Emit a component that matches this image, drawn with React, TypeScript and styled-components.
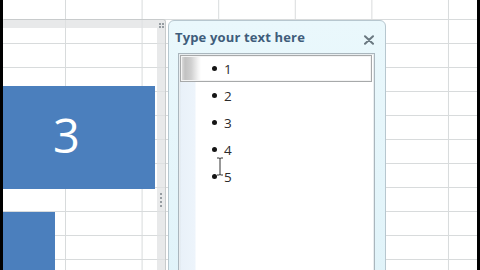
import React from "react";
import styled, { createGlobalStyle } from "styled-components";

const GlobalStyle = createGlobalStyle`
    html, body {
        margin: 0;
        padding: 0;
        background: #000;
    }
    * {
        box-sizing: border-box;
    }
`;

const Screen = styled.div`
    width: 480px;
    height: 270px;
    overflow: hidden;
    background: #000;
    padding: 0 3px;
    display: flex;
`;

/* the worksheet, grid lines drawn as a background */
const Sheet = styled.div`
    flex: 1;
    height: 100%;
    display: flex;
    align-items: flex-start;
    padding-top: 20px;
    background-color: #fff;
    background-image: linear-gradient(to bottom, #d8dbdc 1px, transparent 1px),
        linear-gradient(to right, #d8dbdc 1px, transparent 1px);
    background-size: 100% 24px, 76.6px 100%;
    background-position: 0 19px, 62px 0;
`;

const Frame = styled.div`
    position: relative;
    width: 162px;
    height: 270px;
    border-top: 8px solid rgba(224, 226, 227, 0.75);
    border-right: 8px solid rgba(224, 226, 227, 0.75);
    box-shadow: 1px -1px 0 #c8cbcc;
    border-top-right-radius: 3px;
    display: flex;
    flex-direction: column;
    padding-top: 58px;
`;

const Shape = styled.div<{ $w: number; $h: number }>`
    width: ${(p) => p.$w}px;
    height: ${(p) => p.$h}px;
    background: #4b7fbd;
    color: #fff;
    font-family: "Open Sans", "Liberation Sans", sans-serif;
    font-size: 47px;
    display: flex;
    align-items: center;
    justify-content: center;
    padding-right: 25px;
    padding-bottom: 6px;
`;

const Gap = styled.div`
    height: 23px;
`;

const Handle = styled.div<{ $vertical?: boolean }>`
    position: absolute;
    display: grid;
    grid-template-columns: ${(p) => (p.$vertical ? "2px" : "2px 2px")};
    gap: ${(p) => (p.$vertical ? "2px" : "1px 1px")};
    span {
        width: 2px;
        height: 2px;
        background: #7b8288;
        border-radius: 1px;
    }
`;

const Pane = styled.div`
    margin-left: 3px;
    width: 218px;
    height: 270px;
    border: 1px solid #b7c7cf;
    border-radius: 6px 6px 0 0;
    background: linear-gradient(to bottom, #eaf8fc, #e0f3f9);
    display: flex;
    flex-direction: column;
    padding: 0 10px 0 9px;
`;

const PaneHeader = styled.div`
    height: 32px;
    display: flex;
    align-items: center;
    justify-content: space-between;
    margin-left: -3px;
`;

const Title = styled.div`
    font-family: "Open Sans", "Liberation Sans", sans-serif;
    font-weight: 700;
    font-size: 13px;
    color: #3f5d7b;
    letter-spacing: 0.15px;
`;

const Close = styled.button`
    border: none;
    background: none;
    padding: 0;
    margin: 6px 0 0 0;
    width: 12px;
    height: 10px;
    display: flex;
    cursor: pointer;
`;

const ListBox = styled.div`
    position: relative;
    flex: 1;
    border: 1px solid #aab6bd;
    box-shadow: inset 0 0 0 1px #e9eef0;
    padding: 1px 2px 0 1px;
    background: linear-gradient(
        to right,
        #dfe6ec 0,
        #dfe6ec 1px,
        #e9f1f9 2px,
        #edf4fb 16px,
        #fff 17px
    );
`;

const Row = styled.div<{ $selected?: boolean }>`
    height: 27px;
    display: flex;
    align-items: center;
    padding-left: 31px;
    border: 1px solid ${(p) => (p.$selected ? "#a7a9aa" : "transparent")};
    box-shadow: ${(p) => (p.$selected ? "inset 0 0 0 1px #f4f4f4" : "none")};
    background: ${(p) =>
        p.$selected
            ? "linear-gradient(to right, #e2e2e2 0, #c2c2c2 4px, #cfcfcf 10px, #f3f3f3 17px, #fff 20px)"
            : "transparent"};
`;

const Bullet = styled.span`
    width: 5px;
    height: 5px;
    border-radius: 50%;
    background: #151515;
    margin-right: 7px;
    margin-top: -1px;
`;

const ItemText = styled.span`
    font-family: "Open Sans", "Liberation Sans", sans-serif;
    font-size: 13.5px;
    color: #2b2b2b;
`;

const Cursor = styled.svg`
    position: absolute;
    left: 37px;
    top: 103px;
`;

const items = ["1", "2", "3", "4", "5"];

const App = () => {
    return (
        <>
            <GlobalStyle />
            <Screen>
                <Sheet>
                    <Frame>
                        <Handle style={{ right: -7, top: -5 }}>
                            <span />
                            <span />
                            <span />
                            <span />
                        </Handle>
                        <Handle $vertical style={{ right: -5, top: 165 }}>
                            <span />
                            <span />
                            <span />
                            <span />
                        </Handle>
                        <Shape $w={152} $h={103}>
                            3
                        </Shape>
                        <Gap />
                        <Shape $w={52} $h={70} />
                    </Frame>
                    <Pane>
                        <PaneHeader>
                            <Title>Type your text here</Title>
                            <Close aria-label="close">
                                <svg width="12" height="10" viewBox="0 0 12 10">
                                    <path
                                        d="M2 1.2 L10 8.8 M10 1.2 L2 8.8"
                                        stroke="#6a7880"
                                        strokeWidth="2"
                                        strokeLinecap="round"
                                    />
                                </svg>
                            </Close>
                        </PaneHeader>
                        <ListBox>
                            {items.map((t, i) => (
                                <Row key={t} $selected={i === 0}>
                                    <Bullet />
                                    <ItemText>{t}</ItemText>
                                </Row>
                            ))}
                            <Cursor width="8" height="19" viewBox="0 0 8 19">
                                <path
                                    d="M1 1 H3 Q4 1 4 2 V17 Q4 18 5 18 H7 M7 1 H5 Q4 1 4 2 M4 17 Q4 18 3 18 H1"
                                    stroke="#333"
                                    strokeWidth="1"
                                    fill="none"
                                />
                            </Cursor>
                        </ListBox>
                    </Pane>
                </Sheet>
            </Screen>
        </>
    );
};

export default App;
